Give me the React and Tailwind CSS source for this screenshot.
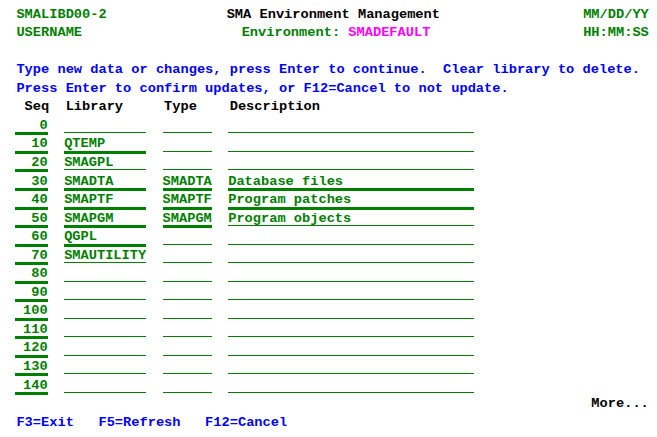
const rows = [
  { seq: "0", lib: "", type: "", desc: "", thick: [1, 0, 0, 0] },
  { seq: "10", lib: "QTEMP", type: "", desc: "", thick: [1, 1, 0, 0] },
  { seq: "20", lib: "SMAGPL", type: "", desc: "", thick: [1, 0, 0, 0] },
  { seq: "30", lib: "SMADTA", type: "SMADTA", desc: "Database files", thick: [1, 1, 1, 1] },
  { seq: "40", lib: "SMAPTF", type: "SMAPTF", desc: "Program patches", thick: [1, 1, 1, 1] },
  { seq: "50", lib: "SMAPGM", type: "SMAPGM", desc: "Program objects", thick: [1, 1, 1, 0] },
  { seq: "60", lib: "QGPL", type: "", desc: "", thick: [1, 1, 0, 0] },
  { seq: "70", lib: "SMAUTILITY", type: "", desc: "", thick: [1, 0, 0, 0] },
  { seq: "80", lib: "", type: "", desc: "", thick: [1, 0, 0, 0] },
  { seq: "90", lib: "", type: "", desc: "", thick: [1, 0, 0, 0] },
  { seq: "100", lib: "", type: "", desc: "", thick: [1, 0, 0, 0] },
  { seq: "110", lib: "", type: "", desc: "", thick: [1, 0, 0, 0] },
  { seq: "120", lib: "", type: "", desc: "", thick: [1, 0, 0, 0] },
  { seq: "130", lib: "", type: "", desc: "", thick: [1, 0, 0, 0] },
  { seq: "140", lib: "", type: "", desc: "", thick: [1, 0, 0, 0] },
];

// input field with a green underline, thick or thin
const Field = ({ width, thick, right, children }) => (
  <span
    className={`block shrink-0 border-[#008000] text-[#008000] whitespace-pre ${width} ${
      right ? "text-right" : ""
    } ${thick ? "h-[18.5px] border-b-[3px]" : "h-[16.5px] border-b"}`}
  >
    {children}
  </span>
);

const Line = ({ className = "", children }) => (
  <div className={`flex items-start h-[18.55px] whitespace-pre ${className}`}>
    {children}
  </div>
);

export default function App() {
  return (
    <div
      className="w-full h-[437px] overflow-hidden bg-white pt-[5.6px] text-[13.68px] leading-[18.55px] font-bold"
      style={{ fontFamily: '"Courier New", "Nimbus Mono PS", FreeMono, "Liberation Mono", monospace' }}
    >
      {/* row 1 */}
      <Line className="pl-[2ch] pr-[1ch]">
        <span className="text-[#008000]">SMALIBD00-2</span>
        <span className="ml-[120px] text-black">SMA Environment Management</span>
        <span className="ml-auto text-[#008000]">MM/DD/YY</span>
      </Line>
      {/* row 2 */}
      <Line className="pl-[2ch] pr-[1ch]">
        <span className="text-[#008000]">USERNAME</span>
        <span className="ml-[159.6px] text-[#008000]">Environment: </span>
        <span className="text-[#ff00ff]">SMADEFAULT</span>
        <span className="ml-auto text-[#008000]">HH:MM:SS</span>
      </Line>
      <Line />
      <Line className="pl-[2ch] text-[#0000ff]">
        Type new data or changes, press Enter to continue.  Clear library to delete.
      </Line>
      <Line className="pl-[2ch] text-[#0000ff]">
        Press Enter to confirm updates, or F12=Cancel to not update.
      </Line>
      <Line className="pl-[3ch] text-black">
        <span className="w-[5ch]">Seq</span>
        <span className="w-[12ch]">Library</span>
        <span className="w-[8ch]">Type</span>
        <span>Description</span>
      </Line>

      {rows.map((r) => (
        <Line key={r.seq} className="pl-[calc(2ch-1.5px)]">
          <Field width="w-[4ch]" thick={r.thick[0]} right>
            {r.seq}
          </Field>
          <span className="w-[2ch] shrink-0" />
          <Field width="w-[10ch]" thick={r.thick[1]}>
            {r.lib}
          </Field>
          <span className="w-[2ch] shrink-0" />
          <Field width="w-[6ch]" thick={r.thick[2]}>
            {r.type}
          </Field>
          <span className="w-[2ch] shrink-0" />
          <Field width="w-[30ch]" thick={r.thick[3]}>
            {r.desc}
          </Field>
        </Line>
      ))}

      <Line className="pr-[1ch]">
        <span className="ml-auto text-black">More...</span>
      </Line>
      <Line className="pl-[2ch] text-[#0000ff]">F3=Exit   F5=Refresh   F12=Cancel</Line>
    </div>
  );
}
